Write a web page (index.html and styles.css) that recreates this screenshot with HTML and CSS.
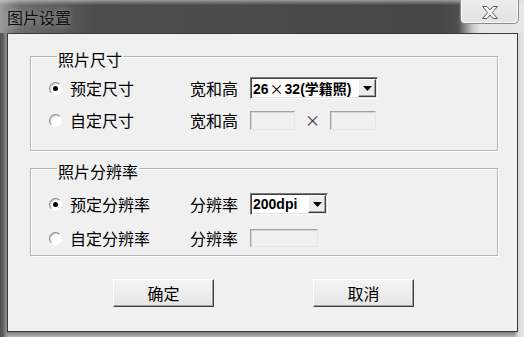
FILE: index.html
```html
<!DOCTYPE html>
<html lang="zh-CN">
<head>
<meta charset="utf-8">
<title>图片设置</title>
<link rel="stylesheet" href="styles.css">
</head>
<body>
<div class="window">
  <div class="titlebar">
    <span class="title">图片设置</span>
    <button class="close" aria-label="关闭">
      <svg width="18" height="13" viewBox="0 0 18 13"><path d="M1.5 0.5 H6 L9 4 L12 0.5 H16.5 L11.3 6.5 L16.5 12.5 H12 L9 9 L6 12.5 H1.5 L6.7 6.5 Z" fill="#fbfbfb" stroke="#5c5c66" stroke-width="1" stroke-linejoin="round"/></svg>
    </button>
  </div>
  <div class="client">
    <fieldset class="group g-size">
      <legend>照片尺寸</legend>
      <div class="row">
        <label class="opt"><input type="radio" name="size" class="radio" checked>预定尺寸</label>
        <span class="lbl">宽和高</span>
        <div class="combo combo-size"><span class="val">26<span class="x">×</span>32(学籍照)</span><span class="drop"><svg width="9" height="5" viewBox="0 0 9 5"><path d="M0 0H9L4.5 5Z" fill="#000"/></svg></span></div>
      </div>
      <div class="row row2">
        <label class="opt"><input type="radio" name="size" class="radio">自定尺寸</label>
        <span class="lbl">宽和高</span>
        <span class="field f-w"></span><span class="times">×</span><span class="field f-h"></span>
      </div>
    </fieldset>
    <fieldset class="group g-res">
      <legend>照片分辨率</legend>
      <div class="row">
        <label class="opt"><input type="radio" name="res" class="radio" checked>预定分辨率</label>
        <span class="lbl">分辨率</span>
        <div class="combo combo-res"><span class="val">200dpi</span><span class="drop"><svg width="9" height="5" viewBox="0 0 9 5"><path d="M0 0H9L4.5 5Z" fill="#000"/></svg></span></div>
      </div>
      <div class="row row2b">
        <label class="opt"><input type="radio" name="res" class="radio">自定分辨率</label>
        <span class="lbl">分辨率</span>
        <span class="field f-res"></span>
      </div>
    </fieldset>
    <div class="buttons">
      <button class="btn">确定</button>
      <button class="btn">取消</button>
    </div>
  </div>
</div>
</body>
</html>
```
FILE: styles.css
```css
html, body {
  margin: 0;
  padding: 0;
}
body {
  width: 524px;
  height: 337px;
  overflow: hidden;
  font-family: "Noto Sans CJK SC", "Liberation Sans", sans-serif;
  font-size: 16px;
  color: #000;
}
.window {
  width: 524px;
  height: 337px;
  display: flex;
  flex-direction: column;
  background:
    linear-gradient(to right, #505050 0, #606060 3px, #8a8a8a 6px, rgba(150,150,150,0) 8px, rgba(150,150,150,0) 514px, #d8d8d8 518px, #e6e6e6 100%),
    linear-gradient(to bottom, #8c8c8c 0, #8c8c8c 331px, #7a7a7a 332px, #b8b8b8 100%);
}
.titlebar {
  height: 33px;
  display: flex;
  justify-content: space-between;
  align-items: flex-start;
  padding-left: 7px;
  background:
    linear-gradient(to bottom, rgba(220,220,220,0.55) 0, rgba(220,220,220,0) 5px),
    linear-gradient(to right, #9c9c9c 0, #6c6c6c 20px, #5c5c5c 60px, #4c4c4c 95px, #474747 440px, #4e4e4e 458px, #c4c4c4 472px, #e4e4e4 480px, #e8e8e8 100%);
}
.title {
  margin-top: 7px;
  line-height: 20px;
  font-size: 16px;
  color: #101010;
  text-shadow: 0 0 6px rgba(200,200,200,0.7);
}
.close {
  margin: 0 5px 0 0;
  width: 59px;
  height: 24px;
  padding: 0;
  display: flex;
  align-items: center;
  justify-content: center;
  border: 1px solid #8a8a8a;
  border-top: none;
  border-radius: 0 0 5px 5px;
  background: linear-gradient(to bottom, #ececec, #e2e2e2);
  box-shadow: inset 0 -1px 0 #fafafa, inset 1px 0 0 #fafafa, inset -1px 0 0 #fafafa;
}
.close svg {
  display: block;
  margin-top: 1px;
}
.client {
  box-sizing: border-box;
  width: 511px;
  height: 299px;
  margin-left: 7px;
  border: 1px solid #3a3a3a;
  background: #f0f0f0;
}
.group {
  margin: 0 0 0 22px;
  width: 468px;
  box-sizing: border-box;
  border: 1px solid #b6b6b6;
  box-shadow: 1px 1px 0 #ffffff, inset 1px 1px 0 #ffffff;
  padding: 10px 0 18px 18px;
  min-width: 0;
}
.group legend {
  margin-left: 8px;
  padding: 6px 1px 0 1px;
  line-height: 16px;
  font-size: 16px;
  height: 16px;
}
.g-size {
  margin-top: 11px;
  height: 106px;
}
.g-res {
  margin-top: 6px;
  height: 99px;
  padding-top: 14px;
  padding-bottom: 5px;
}
.row {
  display: flex;
  align-items: center;
  height: 22px;
  line-height: 22px;
}
.row2 {
  margin-top: 10px;
}
.row2b {
  margin-top: 12px;
}
.opt {
  width: 141px;
  display: flex;
  align-items: center;
  gap: 8px;
}
.radio {
  appearance: none;
  -webkit-appearance: none;
  margin: 0;
  width: 13px;
  height: 13px;
  box-sizing: border-box;
  border-radius: 50%;
  border: 1px solid;
  border-color: #8a8a8a #ffffff #ffffff #8a8a8a;
  background: #ffffff;
  box-shadow: inset 1px 1px 0 #cfcfcf;
  display: flex;
  align-items: center;
  justify-content: center;
}
.radio:checked::after {
  content: "";
  width: 5px;
  height: 5px;
  border-radius: 50%;
  background: #000;
}
.lbl {
  width: 60px;
}
.combo {
  box-sizing: border-box;
  height: 22px;
  display: flex;
  align-items: stretch;
  background: #fff;
  border: 1px solid;
  border-color: #7a7a7a #ffffff #ffffff #7a7a7a;
  box-shadow: inset 1px 1px 0 #404040, inset -1px -1px 0 #e3e3e3;
}
.combo .val {
  flex: 1;
  padding-left: 2px;
  font-family: "Liberation Sans", "Noto Sans CJK SC", sans-serif;
  font-weight: bold;
  font-size: 14px;
  line-height: 20px;
  white-space: nowrap;
  overflow: hidden;
}
.combo .x {
  font-weight: normal;
  font-family: "Noto Sans CJK SC", sans-serif;
  font-size: 14px;
  padding: 0 1px;
}
.combo .drop {
  width: 18px;
  margin: 1px 1px 1px 0;
  box-sizing: border-box;
  display: flex;
  align-items: center;
  justify-content: center;
  background: #ececec;
  border: 1px solid;
  border-color: #ffffff #404040 #404040 #ffffff;
  box-shadow: inset -1px -1px 0 #a0a0a0;
}
.combo-size {
  width: 128px;
}
.combo-res {
  width: 78px;
}
.field {
  box-sizing: border-box;
  height: 19px;
  background: #f0f0f0;
  border: 1px solid;
  border-color: #a0a0a0 #e6e6e6 #e6e6e6 #a0a0a0;
  box-shadow: inset 1px 1px 0 #d6d6d6;
}
.f-w {
  width: 45px;
}
.times {
  width: 35px;
  text-align: center;
  color: #333;
  font-size: 15px;
}
.f-h {
  width: 46px;
}
.f-res {
  width: 68px;
  height: 18px;
}
.buttons {
  display: flex;
  gap: 99px;
  margin: 23px 0 0 105px;
}
.btn {
  width: 101px;
  height: 28px;
  padding: 0;
  font-family: "Noto Sans CJK SC", sans-serif;
  font-size: 16px;
  color: #000;
  background: linear-gradient(to bottom, #f4f4f4, #e6e6e6);
  border: 1px solid;
  border-color: #ffffff #404040 #404040 #ffffff;
  box-shadow: inset -1px -1px 0 #a0a0a0;
}
```
